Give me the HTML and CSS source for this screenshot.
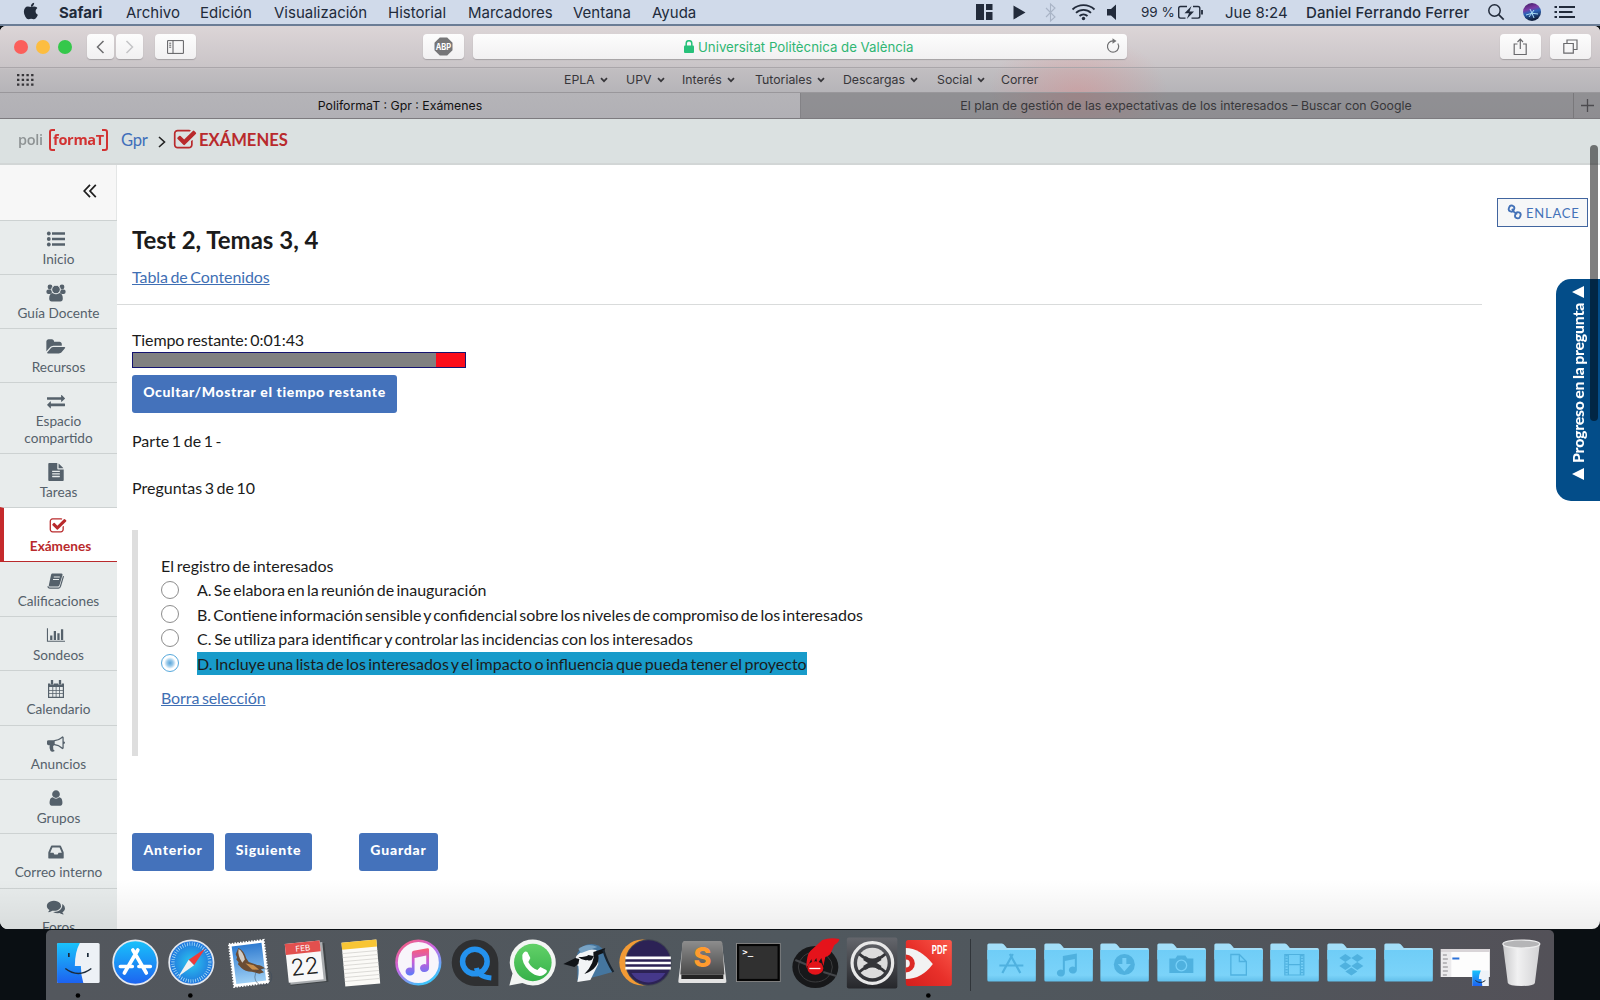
FILE: index.html
```html
<!DOCTYPE html>
<html lang="es">
<head>
<meta charset="utf-8">
<title>PoliformaT : Gpr : Exámenes</title>
<link rel="stylesheet" href="styles.css">
</head>
<body>
<svg class="defs" aria-hidden="true">
  <defs>
    <linearGradient id="gBlue" x2="0" y2="1"><stop stop-color="#19c3fb"/><stop offset="1" stop-color="#1d62f0"/></linearGradient>
    <linearGradient id="gFolder" x2="0" y2="1"><stop stop-color="#6fcdf7"/><stop offset=".8" stop-color="#7bd3f9"/><stop offset="1" stop-color="#62bfea"/></linearGradient>
    <linearGradient id="gTunes" x1="0" y1="0" x2=".6" y2="1"><stop stop-color="#fb5a6c"/><stop offset=".5" stop-color="#c867e8"/><stop offset="1" stop-color="#3fc3fa"/></linearGradient>
    <linearGradient id="gNote" x2="0" y2="1"><stop stop-color="#fb5c74"/><stop offset=".5" stop-color="#c55fd8"/><stop offset="1" stop-color="#5b7bfa"/></linearGradient>
    <linearGradient id="gGreen" x2="0" y2="1"><stop stop-color="#62d168"/><stop offset="1" stop-color="#36b14a"/></linearGradient>
    <linearGradient id="gDark" x2="0" y2="1"><stop stop-color="#64666c"/><stop offset="1" stop-color="#26272b"/></linearGradient>
    <linearGradient id="gSub" x2="0" y2="1"><stop stop-color="#8d8d8d"/><stop offset="1" stop-color="#4a4a4a"/></linearGradient>
    <linearGradient id="gPdf" x1="0" y1="1" x2="1" y2="0"><stop stop-color="#d31f1c"/><stop offset=".5" stop-color="#e8302a"/><stop offset="1" stop-color="#fb5a4c"/></linearGradient>
    <linearGradient id="gBin" x2="1" y2="0"><stop stop-color="#c9c9cb"/><stop offset=".4" stop-color="#f1f1f2"/><stop offset="1" stop-color="#d2d2d4"/></linearGradient>
    <linearGradient id="gSky" x2="0" y2="1"><stop stop-color="#2f7bd0"/><stop offset="1" stop-color="#9fd0f5"/></linearGradient>
    <radialGradient id="gSafari"><stop stop-color="#2cc7ef"/><stop offset="1" stop-color="#1f73dd"/></radialGradient>
    <linearGradient id="gSiri" x2=".3" y2="1"><stop stop-color="#3b1a5c"/><stop offset=".4" stop-color="#7a3aa5"/><stop offset=".6" stop-color="#2a62b8"/><stop offset="1" stop-color="#10203e"/></linearGradient>
    <symbol id="check" viewBox="0 0 1792 1792"><path d="M1472 930v318q0 119-84.500 203.500t-203.500 84.500h-832q-119 0-203.500-84.500t-84.500-203.500v-832q0-119 84.500-203.500t203.500-84.500h832q63 0 117 25 15 7 18 23 3 17-9 29l-49 49q-10 10-23 10-3 0-9-2-23-6-45-6h-832q-66 0-113 47t-47 113v832q0 66 47 113t113 47h832q66 0 113-47t47-113v-254q0-13 9-22l64-64q10-10 23-10 6 0 12 3 20 8 20 29zm231-489l-814 814q-24 24-57 24t-57-24l-430-430q-24-24-24-57t24-57l110-110q24-24 57-24t57 24l263 263 647-647q24-24 57-24t57 24l110 110q24 24 24 57t-24 57z"/></symbol>
    <symbol id="folder" viewBox="-28 0 56 70"><path d="M-24 15q0-1.500 1.500-1.500h13q1.500 0 3 2l2 2.500h27.500q1.500 0 1.500 1.500v10h-48.500z" fill="#a3def8"/><path d="M-24 20h48.500v30q0 1.500-1.500 1.500h-45.500q-1.500 0-1.500-1.500z" fill="url(#gFolder)"/></symbol>
    <symbol id="chev" viewBox="0 0 8 6"><path d="M1 1.200l3 3 3-3" fill="none" stroke="#37363a" stroke-width="1.700"/></symbol>
  </defs>
</svg>

<header class="menubar">
  <svg class="apple" width="18" height="18" viewBox="0 0 1792 1792"><path fill="#222b3b" d="M1579 1279q-39 125-123 250-129 196-257 196-49 0-140-32-86-32-151-32-61 0-142 33-81 34-132 34-152 0-301-259-147-261-147-503 0-228 113-374 113-144 284-144 72 0 177 30 104 30 138 30 45 0 143-34 102-34 173-34 119 0 213 65 52 36 104 100-79 67-114 118-65 94-65 207 0 124 69 223t158 126zm-372-1160q0 61-29 136-30 75-93 138-54 54-108 72-37 11-104 17 3-149 78-257 74-107 250-148 1 3 2.500 11t2.500 11q0 4 .5 10t.5 10z"/></svg>
  <nav class="menus">
    <span class="m-safari">Safari</span><span class="m-archivo">Archivo</span><span class="m-edicion">Edición</span><span class="m-vis">Visualización</span><span class="m-hist">Historial</span><span class="m-marc">Marcadores</span><span class="m-vent">Ventana</span><span class="m-ayuda">Ayuda</span>
  </nav>
  <svg class="status" width="162" height="24" viewBox="970 0 162 24" fill="#222b3b">
    <path d="M976 4h8v16h-8zM986 4h6.500v6h-6.500zM986 12h6.500v8h-6.500zM1013.500 5.500l12 7-12 7z"/>
    <path d="M1046 8l9 9-4.500 4V4l4.500 4-9 9" fill="none" stroke="#a9b4c6" stroke-width="1.100"/>
    <g fill="none" stroke="#222b3b" stroke-width="1.800"><path d="M1072.500 9.500a16 16 0 0 1 22 0M1076 12.800a11 11 0 0 1 15 0M1079.500 16a6 6 0 0 1 8 0"/></g><circle cx="1083.500" cy="18.500" r="1.700"/>
    <path d="M1107 9h4l5-4.500v15.500l-5-4.500h-4z"/>
  </svg>
  <span class="pct">99 %</span>
  <svg class="battery" width="28" height="24" viewBox="1177 0 28 24" fill="none" stroke="#222b3b" stroke-width="1.400"><path d="M1187 6.500h-6.500q-1.800 0-1.800 1.800v8q0 1.800 1.800 1.800h5M1193 6.500h5q1.800 0 1.800 1.800v8q0 1.800-1.800 1.800h-6.500"/><path d="M1191.500 6l-7 7.200h4.500l-2.200 5.800 7.200-7.500h-4.500z" fill="#222b3b" stroke="none"/><path d="M1202 10v4.500" stroke-width="1.800"/></svg>
  <span class="clock">Jue 8:24</span><span class="user">Daniel Ferrando Ferrer</span>
  <svg class="tray" width="92" height="24" viewBox="1486 0 92 24"><circle cx="1494.500" cy="10.500" r="5.700" fill="none" stroke="#222b3b" stroke-width="1.500"/><path d="M1498.700 14.700l5 5" stroke="#222b3b" stroke-width="1.700"/><circle cx="1532" cy="12" r="9" fill="url(#gSiri)"/><path d="M1526 15q6-3 12-1M1530 9q2 4 4 9M1529 17l5-7" stroke="#a9dcf5" stroke-width="1" fill="none"/><path d="M1554.500 7h2.500M1554.500 12h2.500M1554.500 17h2.500M1559 7h16M1559 12h13.500M1559 17h16" stroke="#222b3b" stroke-width="2"/></svg>
</header>

<section class="window">
  <div class="chrome">
    <div class="toolbar">
      <i class="light red"></i><i class="light amber"></i><i class="light green"></i>
      <span class="btn back"><svg width="9" height="14" viewBox="0 0 9 14"><path d="M7.500 1l-6 6 6 6" fill="none" stroke="#6d6d6f" stroke-width="1.500"/></svg></span>
      <span class="btn fwd"><svg width="9" height="14" viewBox="0 0 9 14"><path d="M1.500 1l6 6-6 6" fill="none" stroke="#c4c4c6" stroke-width="1.500"/></svg></span>
      <span class="btn side"><svg width="17" height="14" viewBox="0 0 17 14" fill="none" stroke="#5d5d60"><path d="M.6.600h15.800v12.800H.6zM6 .6v12.800M2.200 3.200h2M2.200 5.200h2M2.200 7.200h2"/></svg></span>
      <span class="btn abp"><svg width="19" height="19" viewBox="0 0 19 19"><path d="M5.800.500h7.400l5.300 5.300v7.400l-5.300 5.300H5.800L.5 13.200V5.800z" fill="#767678"/><text x="9.500" y="12.900" font-size="9" font-weight="700" fill="#fff" text-anchor="middle" textLength="15.500" lengthAdjust="spacingAndGlyphs">ABP</text></svg></span>
      <div class="url">
        <svg width="10" height="13" viewBox="0 0 10 13"><rect y="5.500" width="10" height="7.500" rx="1" fill="#27c17a"/><path d="M2.200 6V3.500a2.800 2.800 0 0 1 5.600 0V6" fill="none" stroke="#27c17a" stroke-width="1.500"/></svg>
        <span>Universitat Politècnica de València</span>
        <svg class="reload" width="14" height="16" viewBox="0 0 14 16"><path d="M11.800 5.500a5.600 5.600 0 1 1-4.800-2.600" fill="none" stroke="#727274" stroke-width="1.200"/><path d="M6.500.200l4 2.800-4 2.800z" fill="#727274"/></svg>
      </div>
      <span class="btn share"><svg width="15" height="18" viewBox="0 0 15 18" fill="none" stroke="#69696c" stroke-width="1.200"><path d="M4.500 6H1.200v10.500h12V6H10M7.300 11V1.200M4.500 4l2.800-2.800L10 4"/></svg></span>
      <span class="btn tabsbtn"><svg width="15" height="15" viewBox="0 0 15 15" fill="none" stroke="#69696c" stroke-width="1.200"><path d="M.8 4.500h9.500v9.700H.8zM4 4.500V1h10v9.500h-3.700"/></svg></span>
    </div>
    <div class="bookmarks">
      <svg class="dots" width="17" height="12" viewBox="0 0 17 12"><path d="M0 1.200h17M0 5.900h17M0 10.600h17" stroke="#363539" stroke-width="2.200" stroke-dasharray="2.400 2.300"/></svg>
      <span class="b1">EPLA<svg><use href="#chev"/></svg></span><span class="b2">UPV<svg><use href="#chev"/></svg></span><span class="b3">Interés<svg><use href="#chev"/></svg></span><span class="b4">Tutoriales<svg><use href="#chev"/></svg></span><span class="b5">Descargas<svg><use href="#chev"/></svg></span><span class="b6">Social<svg><use href="#chev"/></svg></span><span>Correr</span>
    </div>
    <div class="tabs">
      <div class="tab on">PoliformaT : Gpr : Exámenes</div>
      <div class="tab off">El plan de gestión de las expectativas de los interesados – Buscar con Google</div>
      <div class="plus"><svg width="13" height="13" viewBox="0 0 13 13"><path d="M0 6.500h13M6.500 0v13" stroke="#4c4b4f" stroke-width="1.300"/></svg></div>
    </div>
  </div>

  <div class="crumbs">
    <span class="logo"><span class="poli">poli</span><span class="forma">formaT</span></span>
    <a class="gpr">Gpr</a>
    <svg class="gt" width="8" height="12" viewBox="0 0 8 12"><path d="M1 1l5.500 5L1 11" fill="none" stroke="#222" stroke-width="1.600"/></svg>
    <svg class="crumbcheck" width="24" height="24"><use href="#check"/></svg>
    <b>EXÁMENES</b>
  </div>

  <div class="page">
    <nav class="sidebar">
      <div class="collapse"><svg width="14" height="14" viewBox="0 0 14 14"><path d="M7 .8L1.200 7 7 13.200M12.800.8L7 7l5.800 6.200" fill="none" stroke="#1d1d1d" stroke-width="1.700"/></svg></div>
      <a class="item"><svg viewBox="0 0 18 18"><path d="M5 3.500h13M5 9h13M5 14.500h13" stroke="currentColor" stroke-width="2.400"/><circle cx="1.800" cy="3.500" r="1.900"/><circle cx="1.800" cy="9" r="1.900"/><circle cx="1.800" cy="14.500" r="1.900"/></svg>Inicio</a>
      <a class="item"><svg viewBox="0 0 18 18"><circle cx="3" cy="3" r="2.400"/><circle cx="15" cy="3" r="2.400"/><rect x="-.6" y="5.500" width="5.600" height="4.500" rx="2"/><rect x="13" y="5.500" width="5.600" height="4.500" rx="2"/><circle cx="9" cy="5.500" r="4.300" stroke="#e8ecec"/><path d="M5.500 9q3.500 2.500 7 0 3.300.5 3.300 5.500 0 3-2.500 3H4.700q-2.500 0-2.500-3 0-5 3.300-5.500z"/></svg>Guía Docente</a>
      <a class="item"><svg viewBox="0 0 1792 1792"><path d="M1815 952q0 31-31 66l-336 396q-43 51-120.500 86.500t-143.500 35.500h-1088q-34 0-60.500-13t-26.500-43q0-31 31-66l336-396q43-51 120.500-86.500t143.500-35.500h1088q34 0 60.500 13t26.500 43zm-343-344v160h-832q-94 0-197 47.500t-164 119.500l-337 396-5 6q0-4-.5-12.500t-.5-12.500v-960q0-92 66-158t158-66h320q92 0 158 66t66 158v32h544q92 0 158 66t66 158z"/></svg>Recursos</a>
      <a class="item tall"><svg viewBox="0 0 1792 1792"><path d="M1792 1184v192q0 13-9.500 22.500t-22.500 9.500h-1376v192q0 13-9.500 22.500t-22.500 9.500q-12 0-24-10l-319-320q-9-9-9-22 0-14 9-23l320-320q9-9 23-9 13 0 22.500 9.500t9.500 22.500v192h1376q13 0 22.500 9.500t9.500 22.500zm0-544q0 14-9 23l-320 320q-9 9-23 9-13 0-22.500-9.500t-9.500-22.500v-192h-1376q-13 0-22.500-9.500t-9.500-22.500v-192q0-13 9.500-22.500t22.500-9.500h1376v-192q0-14 9-23t23-9q12 0 24 10l319 319q9 9 9 23z"/></svg>Espacio<br>compartido</a>
      <a class="item"><svg viewBox="0 0 1792 1792"><path d="M1596 476q14 14 28 36h-472v-472q22 14 36 28zm-476 164h544v1056q0 40-28 68t-68 28h-1344q-40 0-68-28t-28-68v-1600q0-40 28-68t68-28h800v544q0 40 28 68t68 28zm160 736v-64q0-14-9-23t-23-9h-704q-14 0-23 9t-9 23v64q0 14 9 23t23 9h704q14 0 23-9t9-23zm0-256v-64q0-14-9-23t-23-9h-704q-14 0-23 9t-9 23v64q0 14 9 23t23 9h704q14 0 23-9t9-23zm0-256v-64q0-14-9-23t-23-9h-704q-14 0-23 9t-9 23v64q0 14 9 23t23 9h704q14 0 23-9t9-23z"/></svg>Tareas</a>
      <a class="item active"><svg><use href="#check"/></svg>Exámenes</a>
      <a class="item"><svg viewBox="0 0 18 18"><path d="M5 1.500h9.500q1.500 0 1 1.500l-3 10q-.5 1.500-2 1.500H3q-1.500 0-1.200-1.200L4 3q.3-1.200 1-1.500z"/><path d="M6.800 5h6M6 7.500h6" stroke="#e8ecec" stroke-width="1"/><path d="M16.500 4.200l-3 10q-.5 2-2 2H3q-2 0-2-2" fill="none" stroke="currentColor" stroke-width="1.200"/></svg>Calificaciones</a>
      <a class="item"><svg viewBox="0 0 20 18"><path d="M.5 1.500v14.500h19.500" fill="none" stroke="currentColor" stroke-width="1.200"/><path d="M3.500 9.500h2.500v5H3.500zM7.500 4.500H10v10H7.500zM11.500 7H14v7.500h-2.500zM15.500 2.500H18v12h-2.500z"/></svg>Sondeos</a>
      <a class="item"><svg viewBox="0 0 18 18"><path d="M1 3.500h16V18H1z" /><path d="M2.200 7h3.200v3H2.200zM6.200 7h2.500v3H6.200zM9.500 7H12v3H9.500zM12.800 7h3v3h-3zM2.200 10.700h3.200v2.600H2.200zM6.200 10.700h2.500v2.600H6.200zM9.500 10.700H12v2.600H9.500zM12.800 10.700h3v2.600h-3zM2.200 14.100h3.200v2.700H2.200zM6.200 14.100h2.500v2.700H6.200zM9.500 14.100H12v2.700H9.500zM12.800 14.100h3v2.700h-3z" fill="#e8ecec"/><path d="M5 .5v4M13 .5v4" stroke="#e8ecec" stroke-width="3.600"/><path d="M5 0v4.500M13 0v4.500" stroke="currentColor" stroke-width="2.300"/></svg>Calendario</a>
      <a class="item"><svg viewBox="0 0 1792 1792"><path d="M1664 640q53 0 90.500 37.500t37.500 90.500-37.500 90.500-90.500 37.500v384q0 52-38 90t-90 38q-417-347-812-380-58 19-91 66t-31 100.500 40 92.500q-20 33-23 65.500t6 58 33.500 55 48 50 61.500 50.500q-29 58-111.500 83t-168.500 11.500-132-55.500q-7-23-29.500-87.500t-32-94.500-23-89-15-101 3.500-98.500 22-110.500h-122q-66 0-113-47t-47-113v-192q0-66 47-113t113-47h480q435 0 896-384 52 0 90 38t38 90v384zm-128 604v-954q-394 302-768 343v270q377 42 768 341z"/></svg>Anuncios</a>
      <a class="item"><svg viewBox="0 0 1792 1792"><path d="M1536 1399q0 109-62.500 187t-150.500 78h-854q-88 0-150.500-78t-62.500-187q0-85 8.500-160.500t31.500-152 58.500-131 94-89 134.500-34.500q131 128 313 128t313-128q76 0 134.500 34.500t94 89 58.500 131 31.500 152 8.500 160.500zm-256-887q0 159-112.500 271.500t-271.500 112.500-271.500-112.500-112.500-271.500 112.500-271.500 271.500-112.500 271.500 112.500 112.500 271.500z"/></svg>Grupos</a>
      <a class="item"><svg viewBox="0 0 1792 1792"><path d="M1151 960h316q-1-3-2.500-8.500t-2.500-7.500l-212-496h-708l-212 496q-1 3-2.500 8.500t-2.500 7.500h316l95 192h320zm513 30v482q0 26-19 45t-45 19h-1408q-26 0-45-19t-19-45v-482q0-62 25-123l238-552q10-25 36.500-42t52.500-17h832q26 0 52.500 17t36.500 42l238 552q25 61 25 123z"/></svg>Correo interno</a>
      <a class="item"><svg viewBox="0 0 1792 1792"><path d="M1408 768q0 139-94 257t-256.500 186.500-353.500 68.500q-86 0-176-16-124 88-278 128-36 9-86 16h-3q-11 0-20.500-8t-11.500-21q-1-3 0-10l6-15 15-18q60-60 100-150-124-72-195-177t-71-224q0-139 94-257t256.500-186.500 353.500-68.500 353.500 68.500 256.500 186.500 94 257zm384 256q0 120-71 224.500t-195 176.500q40 90 100 150l15 18 6 15q0 30-35 36-50-7-86-16-154-40-278-128-90 16-176 16-271 0-472-132 58 4 88 4 161 0 309-45t264-129q125-92 192-212t67-254q0-77-23-152 129 71 204 178t75 230z"/></svg>Foros</a>
    </nav>

    <main class="content">
      <div class="head">
        <div>
          <h1>Test 2, Temas 3, 4</h1>
          <a class="link toc">Tabla de Contenidos</a>
        </div>
        <a class="enlace"><svg width="16" height="16" viewBox="0 0 16 16" fill="none" stroke="#4472b8" stroke-width="2"><rect x="2" y="1" width="5.500" height="6.500" rx="2.600" transform="rotate(20 4.500 4.500)"/><rect x="8.800" y="8.200" width="5.500" height="6.500" rx="2.600" transform="rotate(20 11.500 11.500)"/><path d="M5.500 4.500q1 4 5.500 5.500" stroke-width="1.800"/></svg>ENLACE</a>
      </div>
      <hr>
      <p class="time">Tiempo restante: 0:01:43</p>
      <div class="meter"><i></i></div>
      <button class="action toggle">Ocultar/Mostrar el tiempo restante</button>
      <p class="part">Parte 1 de 1 -</p>
      <p class="count">Preguntas 3 de 10</p>
      <div class="question">
        <p>El registro de interesados</p>
        <label class="opt-a"><i class="radio"></i><span>A. Se elabora en la reunión de inauguración</span></label>
        <label class="opt-b"><i class="radio"></i><span>B. Contiene información sensible y confidencial sobre los niveles de compromiso de los interesados</span></label>
        <label class="opt-c"><i class="radio"></i><span>C. Se utiliza para identificar y controlar las incidencias con los interesados</span></label>
        <label class="opt-d"><i class="radio sel"></i><span class="hl">D. Incluye una lista de los interesados y el impacto o influencia que pueda tener el proyecto</span></label>
        <a class="link clear">Borra selección</a>
      </div>
      <div class="actions">
        <button class="action prev">Anterior</button><button class="action next">Siguiente</button><button class="action save">Guardar</button>
      </div>
    </main>
  </div>
  <div class="progress"><i></i><span>Progreso en la pregunta</span><i></i></div>
  <div class="scroll"></div>
  <div class="fade"></div>
</section>

<footer class="dock">
  <svg viewBox="-28 0 56 70"><rect x="-21.300" y="13" width="42.600" height="40" rx="1.500" fill="#edf1f6"/><path d="M-20 13H1.500Q-3.500 22-3.500 36H2.500Q2.500 45 5 53H-20q-1.300 0-1.300-1.500V14.500q0-1.500 1.300-1.500z" fill="url(#gBlue)"/><path d="M-9.500 23v4M9.500 23v4" stroke="#1b2a3a" stroke-width="1.700"/><path d="M-13 38.500q13 10 26 0" fill="none" stroke="#1b2a3a" stroke-width="1.500"/><circle cx="-.4" cy="65.500" r="2.300" fill="#000"/></svg>
  <svg viewBox="-28 0 56 70"><circle cy="32.500" r="22.200" fill="url(#gBlue)" stroke="#e4e8ee" stroke-width="1.700"/><path d="M2.500 20L-11 43M-2.500 20L11 43M-15 36.500h12M3.500 36.500H15" stroke="#fff" stroke-width="3.600" stroke-linecap="round"/></svg>
  <svg viewBox="-28 0 56 70"><circle cy="32.500" r="22.200" fill="url(#gSafari)" stroke="#e4e8ee" stroke-width="1.700"/><circle cy="32.500" r="18.500" fill="none" stroke="#b8e4f8" stroke-width="3.500" stroke-dasharray=".7 1.720"/><path d="M14 18.500L2.700 35.200l-5.400-5.400z" fill="#ee3b3b"/><path d="M-13 46.500l10.300-16.700 5.400 5.400z" fill="#f1f1f1"/><circle cx="-1" cy="65.500" r="2.300" fill="#000"/></svg>
  <svg viewBox="-28 0 56 70"><g transform="rotate(-7 0 33)"><path d="M-17 12h35v43h-35z" fill="#fff" stroke="#fff" stroke-width="2" stroke-dasharray="1.500 1.300"/><path d="M-14.500 14.500h30v38h-30z" fill="url(#gSky)"/><path d="M-8 17q5 3 6.500 11l2 4 8 4q5 1 7 4l-4 1 3 3-5 1-7-3q-7-1-10-5l-3-4 1-2-2-3 1-2-1-3 1-2z" fill="#6b4c33"/><path d="M-8 18q4 3 5 11l-3 3q-4-7-2-14z" fill="#d2ccc5"/><path d="M-3 33l8 3 5 5-7-1z" fill="#c98f4c"/></g><circle cx="15" cy="47" r="8.500" fill="none" stroke="#3c4a5a" opacity=".5"/></svg>
  <svg viewBox="-28 0 56 70"><g transform="rotate(-6 0 33)"><path d="M-17 15h38v39h-38z" fill="#3f4447"/><path d="M-17 14h36v39h-36z" fill="#a9acaf"/><path d="M-18.500 12h35v39h-35z" fill="#f8f8f8"/><path d="M-18.500 12h35v11h-35z" fill="#e2504e"/><text x="-1" y="20.800" text-anchor="middle" font-size="8" fill="#fff">FEB</text><text x="-1" y="44.500" text-anchor="middle" font-size="23" font-weight="300" fill="#222">22</text></g></svg>
  <svg viewBox="-28 0 56 70"><g transform="rotate(-5 0 33)"><path d="M-18 11h35v44h-35z" fill="#fbfaf7"/><path d="M-18 11h35v7h-35z" fill="#f8c534"/><path d="M-18 22h35M-18 26h35M-18 30h35M-18 34h35M-18 38h35M-18 42h35M-18 46h35M-18 50h35" stroke="#d5d3d0" stroke-width=".8"/></g></svg>
  <svg viewBox="-28 0 56 70"><circle cy="32.500" r="21.800" fill="#f8f5fb" stroke="url(#gTunes)" stroke-width="2.600"/><path d="M-6.500 23q0-1.800 1.700-2.200L9 18.300q1.700-.3 1.700 1.400V38a4.500 4 0 1 1-2.800-3.600V25.500L-3.800 28v13.500a4.500 4 0 1 1-2.700-3.700z" fill="url(#gNote)"/></svg>
  <svg viewBox="-28 0 56 70"><path d="M23 56H0A23.300 23.300 0 1 1 23 33z" fill="#2f3032"/><circle cx="-.5" cy="31.500" r="12.300" fill="none" stroke="#2492ee" stroke-width="5.500"/><path d="M1 38q2 9 15 10" fill="none" stroke="#2492ee" stroke-width="5"/></svg>
  <svg viewBox="-28 0 56 70"><path d="M-23 55.500l3.200-12A23 23 0 1 1-10 53z" fill="#f3f5f3"/><circle cx=".5" cy="32.500" r="18.800" fill="url(#gGreen)"/><path d="M-10 25q2-5 5-3l3 6-2 4q3 6 9 8l3-3 6 3q2 2-3 5-6 3-14-4-8-8-7-16z" fill="#fff"/></svg>
  <svg viewBox="-28 0 56 70"><path d="M-11 23Q-6 14 3 14q8 0 12 6l9 22-14 4-21 5z" fill="#45769f"/><path d="M-12 26q8-8 20-6l2 14-8 16-13 2q2-9 1-16l-4-3z" fill="#f2f4f6"/><path d="M-25 34l12-6 4 1-1 5-4 3zM-10 27q8 0 10-2l5 1q-1 6-6 4-5 1-9-3zM5 22l12-4-2 5-5 2Q12 38-4 44 7 33 5 22z" fill="#111418"/><path d="M-10 19q9-7 19-2l-16 6z" fill="#78a3c4"/><path d="M15 20q3 11 10 22" stroke="#1a2530" stroke-width="2.200" fill="none"/></svg>
  <svg viewBox="-28 0 56 70"><circle cx="-3" cy="32.500" r="23" fill="#f29a35"/><circle cx="3" cy="32.500" r="23.200" fill="#3f4550"/><circle cx="3" cy="32.500" r="22.300" fill="#2c2255"/><path d="M-14 43a20 20 0 0 0 34 0z" fill="#45388a"/><path d="M-20 27.800h45.500M-20 33h45.500M-20 38.200h45.500" stroke="#fff" stroke-width="2.700"/></svg>
  <svg viewBox="-28 0 56 70"><path d="M-19.500 13h39L24 51q.5 2-1.500 2h-45q-2 0-1.500-2z" fill="#e3e3e3"/><path d="M-18 11h36q1.500 0 2 2l2 31.500h-44l2-31.500q.5-2 2-2z" fill="url(#gSub)"/><path d="M-21 44.500h42V49h-42z" fill="#242424"/><text x="0" y="37" font-size="27" font-weight="800" text-anchor="middle" fill="#ff9b2e">S</text></svg>
  <svg viewBox="-28 0 56 70"><rect x="-21.800" y="13.500" width="43.600" height="38" fill="#303030" stroke="#8c8c8c"/><rect x="-20.300" y="15" width="40.600" height="35" fill="none" stroke="#050505" stroke-width="2.200"/><text x="-16" y="25" class="mono" font-size="9" font-weight="700" fill="#fff">&gt;_</text></svg>
  <svg viewBox="-28 0 56 70"><ellipse cx="0" cy="37" rx="23" ry="21" fill="#17181a"/><ellipse cx="0" cy="37" rx="17" ry="15" fill="none" stroke="#3b3c3e"/><path d="M-20 30l12 5M8 42l13 4" stroke="#44464a" stroke-width="2"/><ellipse cx="0" cy="38" rx="8" ry="6.800" fill="#e3141a"/><path d="M-9 38q0-13 4-17L7 10q8-3 17-1 0 3-5 6l-4 9q-3 3-5 3l-2 9-2-8-4 6-1-6-4 6-1-5-3 6z" fill="#e5131b"/><path d="M-6 38.500h11" stroke="#fff" stroke-width="1.300"/></svg>
  <svg viewBox="-28 0 56 70"><rect x="-25.500" y="7.500" width="50.500" height="51" rx="2" fill="url(#gDark)"/><g transform="translate(0 33)"><circle r="20.300" fill="none" stroke="#e8e8e8" stroke-width="3.200"/><circle r="15.300" fill="#dcdcdc"/><path d="M-13-9Q0 3 13-9M-13 9Q0-3 13 9" fill="none" stroke="#333438" stroke-width="3"/><path d="M-8-5L8 5M8-5L-8 5" stroke="#333438" stroke-width="4.500"/></g></svg>
  <svg viewBox="-28 0 56 70"><rect x="-22.500" y="10" width="46" height="46" rx="2.500" fill="url(#gPdf)"/><path d="M-22.500 18q14 0 27 16-11 15-27 15z" fill="#f2f2f2"/><path d="M-22.500 24.500a9 9 0 0 1 0 18v-5a4 4 0 0 0 0-8z" fill="#dc2a25"/><text x="3.500" y="23.500" font-size="11.500" font-weight="700" fill="#fff" textLength="15.500" lengthAdjust="spacingAndGlyphs">PDF</text><circle cx="0" cy="65.500" r="2.300" fill="#000"/></svg>
  <i class="sep"></i>
  <svg viewBox="-28 0 56 70"><use href="#folder" x="-28" width="56" height="70"/><path d="M1.500 24L-9 43M-1.500 24L9 43M-12 35.500H12" stroke="#4fb1df" stroke-width="2.200"/></svg>
  <svg viewBox="-28 0 56 70"><use href="#folder" x="-28" width="56" height="70"/><path d="M-5.500 26l14-2.500V40a4 3.500 0 1 1-2-3v-8l-10 2V43a4 3.500 0 1 1-2-3z" fill="#4fb1df"/></svg>
  <svg viewBox="-28 0 56 70"><use href="#folder" x="-28" width="56" height="70"/><circle cy="34.500" r="10.500" fill="#4fb1df"/><path d="M-2 28h4v6h4.500L0 41.500-6.500 34H-2z" fill="#77d0f8"/></svg>
  <svg viewBox="-28 0 56 70"><use href="#folder" x="-28" width="56" height="70"/><path d="M-12 28.500h6l2-3h8l2 3h6V43h-24z" fill="#4fb1df"/><circle cy="35.500" r="5.300" fill="#4fb1df" stroke="#77d0f8" stroke-width="1.300"/></svg>
  <svg viewBox="-28 0 56 70"><use href="#folder" x="-28" width="56" height="70"/><path d="M-7.500 24.500H1l7 7V45H-7.500zM1 24.500v7h7" fill="none" stroke="#4fb1df" stroke-width="1.300"/></svg>
  <svg viewBox="-28 0 56 70"><use href="#folder" x="-28" width="56" height="70"/><path d="M-9.500 24.500h19V45h-19zM-6 24.500V45M6 24.500V45M-6 34.700H6" fill="none" stroke="#4fb1df" stroke-width="1.200"/><path d="M-7.800 25v19M7.800 25v19" stroke="#4fb1df" stroke-width="2.500" stroke-dasharray="1.400 1.400"/></svg>
  <svg viewBox="-28 0 56 70"><use href="#folder" x="-28" width="56" height="70"/><path d="M-6 24l6 4-6 4-6-4zM6 24l6 4-6 4-6-4zM-6 32l6 4-6 4-6-4zM6 32l6 4-6 4-6-4zM0 37.500l6 4-6 4-6-4z" fill="#4fb1df"/></svg>
  <svg viewBox="-28 0 56 70"><use href="#folder" x="-28" width="56" height="70"/></svg>
  <svg viewBox="-28 0 56 70"><path d="M-24.500 19h49v28h-49z" fill="#fdfdfd"/><path d="M-24.500 19h49v3h-49z" fill="#d9d5d8"/><path d="M-24.500 22h10.500v25h-10.500z" fill="#ecebed"/><path d="M-22.500 25h4M-22.500 29h5M-22.500 33h4M-22.500 37h5M-22.500 41h5M-22.500 45h4" stroke="#88868a"/><path d="M-13 27.500h7v2h-7z" fill="#2d72d9"/><path d="M7 40.500h16.500V56H7z" fill="#eef3f8"/><path d="M7 40.500h8.500q-2 4-2 8.500h2.500l1 7H7z" fill="url(#gBlue)"/><path d="M10 50.500q5 4 10 0" fill="none" stroke="#1b2a3a"/></svg>
  <svg viewBox="-28 0 56 70"><path d="M-18.500 14h37l-5 39q-1 3-13.500 3t-13.500-3z" fill="url(#gBin)"/><ellipse cy="14" rx="18.500" ry="4" fill="#b5b5b7" stroke="#ededee" stroke-width="1.200"/></svg>
</footer>
</body>
</html>
```
FILE: styles.css
```css
* { box-sizing: border-box; }
body { margin: 0; width: 1600px; height: 1000px; overflow: hidden; background: #0a0f13; font-family: Inter, "Liberation Sans", sans-serif; display: flex; flex-direction: column; }
p, h1 { margin: 0; }
svg { display: block; flex: none; }
.defs { position: absolute; width: 0; height: 0; }

.menubar { height: 26px; flex: none; display: flex; background: #d0daea; border-bottom: 2px solid #6b7d96; color: #222b3b; font-size: 15px; line-height: 25px; white-space: nowrap; }
.apple { margin: 2px 19px 0 22px; }
.menus { display: flex; width: 911px; }
.menus span { flex: none; }
.m-safari { width: 67px; font-weight: 700; }
.m-archivo { width: 74px; }
.m-edicion { width: 74px; }
.m-vis { width: 114px; }
.m-hist { width: 80px; }
.m-marc { width: 105px; }
.m-vent { width: 79px; }
.pct { width: 45px; padding-left: 9px; font-size: 13.500px; flex: none; }
.battery { margin-right: 20px; }
.clock { width: 81px; flex: none; }
.user { width: 180px; flex: none; font-weight: 500; letter-spacing: .12px; }

.window { position: relative; height: 903px; flex: none; background: #fff; border-radius: 6px 6px 8px 8px; overflow: hidden; }
.chrome { height: 93px; background: radial-gradient(ellipse 90px 60px at 1078px 68px, rgba(222,140,140,.45), rgba(222,140,140,0)), linear-gradient(#dcd5d7, #c9c4c7 42px, #c1bec1 43px, #b5b4b8 67px, #b1b0b5); }
.toolbar { height: 42px; border-bottom: 1px solid #aaa6aa; display: flex; padding: 8px 9px 0 14px; }
.light { width: 14px; height: 14px; border-radius: 50%; margin: 6px 8px 0 0; }
.red { background: #fb5f5b; }
.amber { background: #fdbd40; }
.green { background: #35c84b; }
.btn { height: 25px; border-radius: 4px; background: linear-gradient(#fdfdfd, #f1f0f1); box-shadow: 0 1px 1px #a5a1a4; display: flex; align-items: center; justify-content: center; }
.back { width: 27px; margin: 0 2px 0 7px; }
.fwd { width: 27px; margin-right: 12px; }
.side { width: 41px; margin-right: 227px; }
.abp { width: 41px; margin-right: 9px; }
.url { width: 654px; height: 25px; margin-right: 373px; border-radius: 4px; background: linear-gradient(#fdfdfd, #f1f0f1); box-shadow: 0 1px 1px #a5a1a4; color: #2fb673; font-size: 13.250px; display: flex; align-items: center; padding-left: 211px; }
.url span { width: 408px; margin-left: 4px; white-space: nowrap; }
.url svg { margin-top: -1px; }
.share { width: 41px; margin-right: 9px; }
.tabsbtn { width: 41px; }
.bookmarks { height: 25px; border-bottom: 1px solid #99979b; display: flex; align-items: center; font-size: 12.300px; color: #37363a; padding-bottom: 1px; }
.dots { margin: 0 530px 0 17px; }
.bookmarks span { display: flex; align-items: center; flex: none; }
.bookmarks span svg { width: 8px; height: 6px; margin-left: 5px; }
.b1 { width: 62px; } .b2 { width: 56px; } .b3 { width: 73px; } .b4 { width: 88px; } .b5 { width: 94px; } .b6 { width: 64px; }
.tabs { display: flex; height: 26px; font-size: 12.300px; line-height: 26px; text-align: center; border-bottom: 1px solid #7d7b7f; }
.tab.on { width: 800px; color: #111; }
.tab.off { width: 774px; background: rgba(90,90,93,.4); border-left: 1px solid #838286; border-right: 1px solid #79787b; color: #38373a; padding-right: 2px; }
.plus { width: 26px; background: rgba(90,90,93,.4); display: flex; align-items: center; justify-content: center; }

.crumbs { height: 46px; background: #dbe1e1; border-bottom: 2px solid #d2d6d6; display: flex; align-items: center; font-family: Lato, sans-serif; font-size: 16.600px; color: #b92a2c; padding: 0 0 3px 18px; }
.logo { width: 103px; display: flex; align-items: center; font-family: "Open Sans", sans-serif; font-size: 14.500px; filter: blur(.5px); }
.poli { width: 31px; color: #8e9394; font-weight: 600; letter-spacing: -.3px; }
.forma { width: 59px; height: 22px; line-height: 18px; color: #d23232; font-weight: 700; text-align: center; border: 2px solid #d23232; border-radius: 3px; letter-spacing: -.3px; position: relative; }
.forma::before, .forma::after { content: ""; position: absolute; left: 4px; right: 4px; height: 3px; background: #dbe1e1; }
.forma::before { top: -2px; }
.forma::after { bottom: -2px; }
.gpr { width: 37px; color: #3f6fba; letter-spacing: -.3px; }
.gt { margin-right: 7px; margin-top: 4px; }
.crumbcheck { fill: #b92a2c; margin-right: 2px; }

.page { display: flex; height: 764px; font-family: Lato, sans-serif; }
.sidebar { width: 117px; flex: none; }
.collapse { height: 54.500px; background: #f7f7f7; border-right: 1px solid #e4e6e6; display: flex; justify-content: flex-end; padding: 19px 19px 0 0; }
.item { display: flex; flex-direction: column; align-items: center; height: 54.300px; background: #e8ecec; border-top: 1px solid #cdd2d2; color: #55616b; font-size: 13.600px; line-height: 16.500px; text-align: center; padding-top: 9px; }
.item svg { width: 18px; height: 18px; margin: 0 5px 3px 0; fill: currentColor; overflow: visible; }
.tall { height: 70.800px; }
.active { background: #fff; color: #b92a2c; font-weight: 700; border-left: 4px solid #c52a2c; border-bottom: 1px solid #b92a2c; }
.active + .item { border-top: 0; padding-top: 10px; }

.content { flex: 1; font-size: 16px; line-height: 24px; color: #1b1b1b; }
.content > * { margin-left: 15px; }
.head { display: flex; justify-content: space-between; height: 139px; padding: 60px 12px 0 0; }
h1 { font-size: 24px; line-height: 30px; font-weight: 700; margin-bottom: 10px; }
.link { color: #3f6fb4; text-decoration: underline; display: block; }
.toc { word-spacing: -1.300px; letter-spacing: -.1px; }
.enlace { width: 91px; height: 29px; margin-top: -27px; border: 1px solid #41659f; background: #f6f7f8; color: #4472b8; font-size: 13px; letter-spacing: .8px; display: flex; align-items: center; gap: 4px; padding-left: 9px; line-height: 28px; }
.enlace svg { margin-top: -2px; width: 15px; }
.content hr { width: 1365px; height: 1px; margin: 0 0 23px; border: 0; background: #d9dbdb; }
.time { word-spacing: -1.300px; letter-spacing: -.1px; }
.meter { width: 334px; height: 16px; border: 1px solid #141470; background: #808080; display: flex; justify-content: flex-end; }
.meter i { width: 29px; background: #fb0d1b; }
.action { display: block; height: 38px; border: 0; border-radius: 3px; background: #4472bb; color: #fff; font: 900 14px/16px Lato, sans-serif; letter-spacing: .8px; padding: 0 0 5px; white-space: nowrap; }
.toggle { width: 265px; margin-top: 7px; letter-spacing: .650px; }
.part { margin-top: 16px; word-spacing: -1.500px; }
.count { margin-top: 23px; word-spacing: -1.500px; }
.question { margin-top: 30px; height: 226px; border-left: 6px solid #dedede; padding: 24px 0 0 23px; line-height: 24.400px; word-spacing: -1.350px; }
.question label { display: flex; align-items: center; height: 24.400px; }
.opt-a { word-spacing: -1.850px; }
.opt-b { word-spacing: -1.950px; }
.opt-d { word-spacing: -1.700px; }
.radio { width: 18px; height: 18px; border: 1px solid #8d8d8d; border-radius: 50%; margin: -2px 18px 0 0; }
.sel { border-color: #55a8dc; background: radial-gradient(#5aa5da 0, #9ccbea 28%, #fff 52%); }
.hl { background: #189bca; line-height: 23px; }
.clear { margin-top: 10px; line-height: 24px; letter-spacing: -.1px; }
.actions { display: flex; margin-top: 77px; }
.prev { width: 82px; margin-right: 11px; }
.next { width: 87px; margin-right: 47px; }
.save { width: 79px; }

.progress { position: absolute; right: 0; top: 253px; width: 44px; height: 222px; border-radius: 0 15px 15px 0; background: #034d89; color: #fff; font: 900 15.800px/44px Lato, sans-serif; letter-spacing: -.2px; word-spacing: -1px; writing-mode: vertical-rl; transform: rotate(180deg); display: flex; align-items: center; justify-content: center; gap: 5px; padding: 14px 0 0; white-space: nowrap; }
.progress i { border: 6px solid transparent; border-width: 6px 0 6px 12px; border-left-color: #fff; transform: scaleX(1); }
.scroll { position: absolute; left: 1590px; top: 119px; width: 8px; height: 276px; border-radius: 4px; background: rgba(0,0,0,.5); }
.fade { position: absolute; left: 0; right: 0; bottom: 0; height: 50px; background: linear-gradient(rgba(0,0,0,0), rgba(0,0,0,.065)); }

.dock { width: 1508px; height: 70px; margin: 1px 0 0 46px; padding-left: 4px; background: linear-gradient(90deg, #53575d, #50585e 50%, #50565c 75%, #535158); border-radius: 5px 5px 0 0; display: flex; flex: none; }
.dock svg { width: 56.700px; height: 70px; overflow: visible; }
.sep { width: 1px; height: 52px; margin: 9px 12px 0 13px; background: #30353a; }
.mono { font-family: "DejaVu Sans Mono", monospace; }
```
